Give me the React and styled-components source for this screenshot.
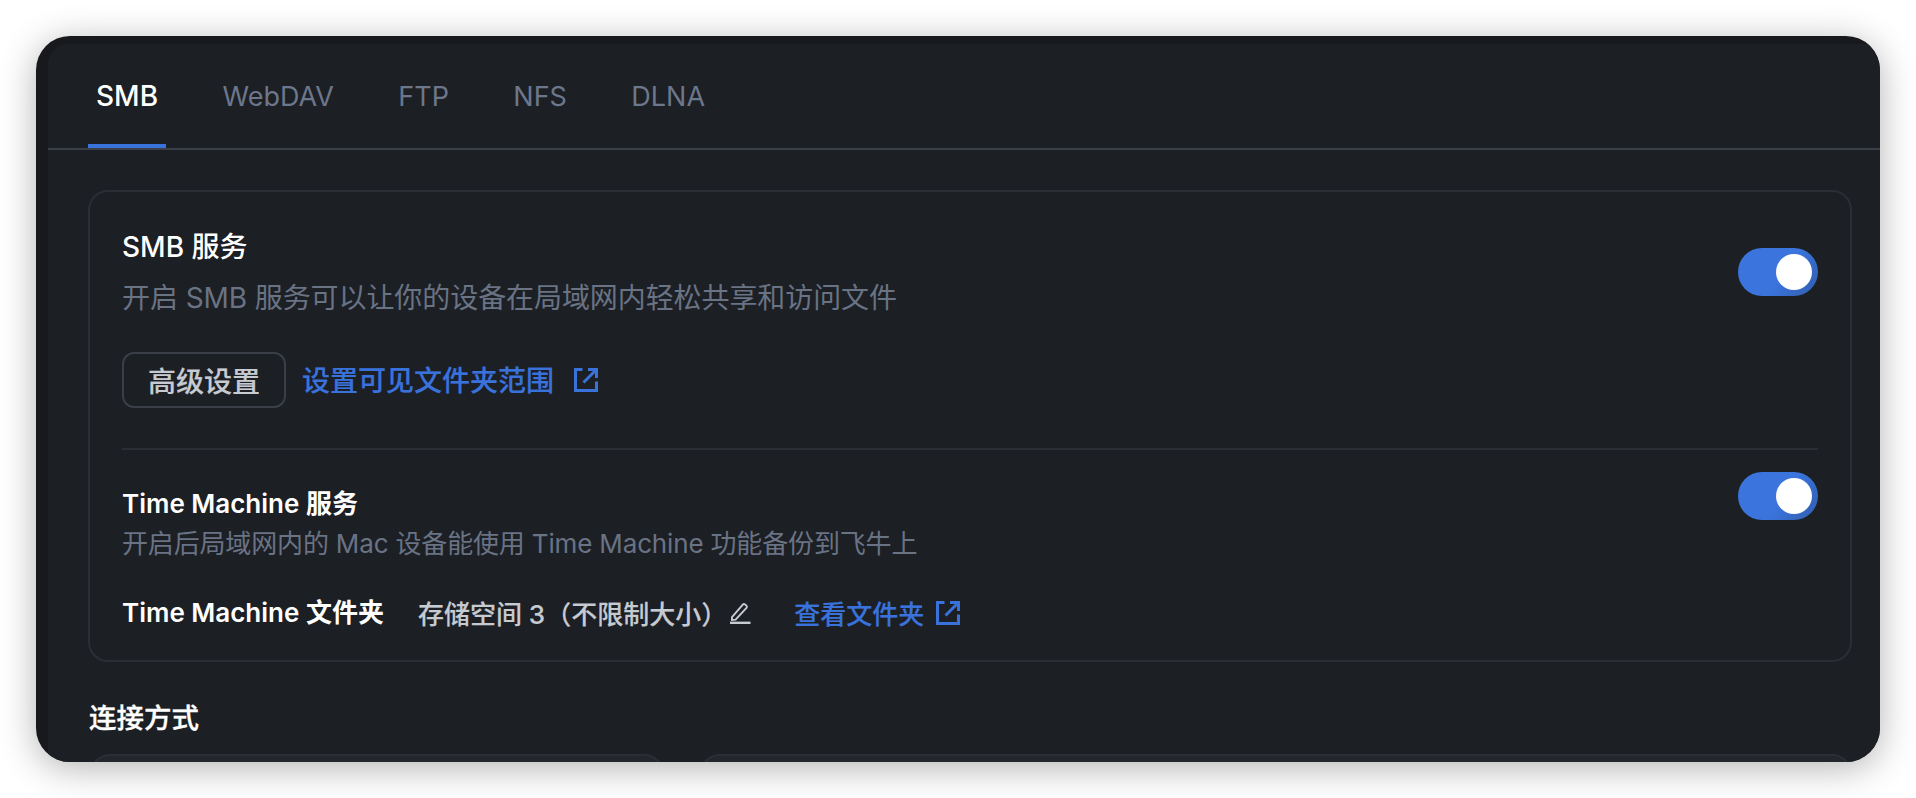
import styled, { createGlobalStyle } from "styled-components";

const GlobalStyle = createGlobalStyle`
  html, body {
    margin: 0;
    height: 100%;
    background: #ffffff;
    overflow: hidden;
  }
  * {
    box-sizing: border-box;
  }
`;

const Page = styled.div`
  padding: 36px;
  height: 798px;
  font-family: Inter, "Noto Sans CJK SC", sans-serif;
`;

const Frame = styled.div`
  height: 726px;
  padding: 8px 0 0 12px;
  background: #17191d;
  border-radius: 34px;
  overflow: hidden;
  box-shadow: 0 6px 36px rgba(0, 0, 0, 0.3);
`;

const Panel = styled.div`
  height: 100%;
  background: #1c1f24;
  border-radius: 20px 0 0 0;
`;

const Tabs = styled.div`
  display: flex;
  gap: 48.4px;
  height: 106px;
  padding-left: 40px;
  border-bottom: 2px solid #3a3f47;
`;

const Tab = styled.div`
  display: flex;
  align-items: center;
  height: 104px;
  padding: 4px 8px 0;
  font-size: ${(props) => (props.$active ? 28 : 27)}px;
  font-weight: ${(props) => (props.$active ? 500 : 400)};
  color: ${(props) => (props.$active ? "#ffffff" : "#6c778b")};
  border-bottom: 4px solid ${(props) => (props.$active ? "#3a72dc" : "transparent")};
`;

const Content = styled.div`
  padding: 40px 28px 0 40px;
`;

const Card = styled.section`
  height: 472px;
  padding: 32px;
  border: 2px solid #2b2e34;
  border-radius: 20px;
`;

const Row = styled.div`
  display: flex;
  justify-content: space-between;
  align-items: flex-start;
`;

const RowText = styled.div`
  padding-top: ${(props) => props.$top}px;
`;

const Title = styled.div`
  font-size: ${(props) => (props.$strong ? 26 : 28)}px;
  line-height: 40px;
  font-weight: ${(props) => (props.$strong ? 600 : 500)};
  color: #ffffff;
`;

const Desc = styled.div`
  margin-top: ${(props) => props.$top}px;
  font-size: ${(props) => props.$size}px;
  letter-spacing: ${(props) => props.$spacing}px;
  line-height: 36px;
  color: #697384;
`;

const Toggle = styled.div`
  flex: none;
  display: flex;
  justify-content: flex-end;
  align-items: center;
  width: 80px;
  height: 48px;
  margin-top: ${(props) => props.$top || 0}px;
  padding-right: 6px;
  border-radius: 24px;
  background: linear-gradient(125deg, #3a74dc 55%, #3462b8 90%);
`;

const Knob = styled.span`
  width: 36px;
  height: 36px;
  border-radius: 50%;
  background: #ffffff;
`;

const Actions = styled.div`
  display: flex;
  align-items: center;
  gap: 16px;
  margin-top: 36px;
`;

const OutlineButton = styled.button`
  width: 164px;
  height: 56px;
  padding: 0;
  font: 500 28px "Inter", "Noto Sans CJK SC", sans-serif;
  -webkit-text-stroke: 0.2px currentColor;
  color: #c6cad1;
  background: transparent;
  border: 2px solid #3a3e46;
  border-radius: 12px;
`;

const LinkText = styled.a`
  display: inline-flex;
  align-items: center;
  gap: ${(props) => props.$gap}px;
  padding-bottom: 2px;
  font-size: ${(props) => props.$size}px;
  font-weight: 500;
  -webkit-text-stroke: 0.2px currentColor;
  color: #3a72dc;

  svg {
    margin-top: 2px;
  }
`;

const Divider = styled.hr`
  height: 2px;
  margin: 40px 0 22px;
  border: 0;
  background: #2b2e34;
`;

const FolderRow = styled.div`
  display: flex;
  align-items: center;
  margin-top: 31px;
`;

const FolderValue = styled.span`
  margin-left: 34px;
  padding-bottom: 2px;
  font-size: 26px;
  font-weight: 500;
  -webkit-text-stroke: 0.15px currentColor;
  color: #c6cad1;
`;

const PencilBtn = styled.span`
  display: inline-flex;
  margin: 0 43px 0 3px;
  color: #c6cad1;
`;

const SectionTitle = styled.h3`
  margin: 38px 0 0;
  padding-left: 1px;
  font-size: 27.5px;
  line-height: 36px;
  font-weight: 500;
  -webkit-text-stroke: 0.3px currentColor;
  color: #ffffff;
`;

const MethodGrid = styled.div`
  display: grid;
  grid-template-columns: 574px 1fr;
  gap: 36px;
  margin-top: 18px;
  padding-left: 2px;
`;

const MethodCard = styled.div`
  height: 60px;
  background: #23262b;
  border: 2px solid #2b2e34;
  border-radius: 20px;
`;

const OpenIcon = () => (
  <svg width="24" height="24" viewBox="0 0 24 24" fill="none" stroke="currentColor" strokeWidth="3">
    <path d="M8.5 1.5h-7v21h21v-9" />
    <path d="M9.5 14.5 21 3M14 1.5h8.5V10" />
  </svg>
);

const PencilIcon = () => (
  <svg width="21" height="22" viewBox="0 0 21 22" fill="none" stroke="currentColor" strokeWidth="1.9">
    <path d="M2 15.2 12.8 2.6a1.6 1.6 0 0 1 2.2-.2l1.4 1.2a1.6 1.6 0 0 1 .1 2.2L5.6 17.6l-3.7.4z" />
    <path d="M0 20.8h20.5" strokeWidth="2.4" />
  </svg>
);

export default function App() {
  return (
    <>
      <GlobalStyle />
      <Page>
        <Frame>
          <Panel>
            <Tabs>
              <Tab $active>SMB</Tab>
              <Tab>WebDAV</Tab>
              <Tab>FTP</Tab>
              <Tab>NFS</Tab>
              <Tab>DLNA</Tab>
            </Tabs>
            <Content>
              <Card>
                <Row>
                  <RowText $top={3}>
                    <Title>SMB 服务</Title>
                    <Desc $top={13} $size={28} $spacing={-0.08}>开启 SMB 服务可以让你的设备在局域网内轻松共享和访问文件</Desc>
                  </RowText>
                  <Toggle $top={24}>
                    <Knob />
                  </Toggle>
                </Row>
                <Actions>
                  <OutlineButton>高级设置</OutlineButton>
                  <LinkText $gap={20} $size={28}>
                    设置可见文件夹范围
                    <OpenIcon />
                  </LinkText>
                </Actions>
                <Divider />
                <Row>
                  <RowText $top={12}>
                    <Title $strong>Time Machine 服务</Title>
                    <Desc $top={2} $size={26} $spacing={-0.16}>开启后局域网内的 Mac 设备能使用 Time Machine 功能备份到飞牛上</Desc>
                  </RowText>
                  <Toggle>
                    <Knob />
                  </Toggle>
                </Row>
                <FolderRow>
                  <Title $strong>Time Machine 文件夹</Title>
                  <FolderValue>存储空间 3（不限制大小）</FolderValue>
                  <PencilBtn>
                    <PencilIcon />
                  </PencilBtn>
                  <LinkText $gap={12} $size={26}>
                    查看文件夹
                    <OpenIcon />
                  </LinkText>
                </FolderRow>
              </Card>
              <SectionTitle>连接方式</SectionTitle>
              <MethodGrid>
                <MethodCard />
                <MethodCard />
              </MethodGrid>
            </Content>
          </Panel>
        </Frame>
      </Page>
    </>
  );
}
